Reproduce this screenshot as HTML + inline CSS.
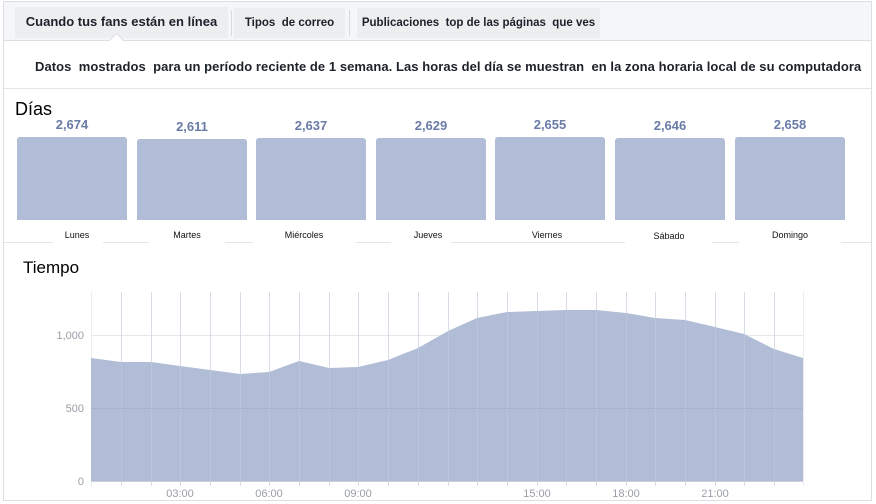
<!DOCTYPE html>
<html><head><meta charset="utf-8"><style>
body{margin:0;width:876px;height:504px;background:#fff;font-family:"Liberation Sans",Arial,sans-serif;position:relative;overflow:hidden}
.a{position:absolute}
.tab{position:absolute;top:8px;height:30px;background:#eceef0;font-size:11.5px;font-weight:bold;line-height:30px;color:#1d2129;white-space:nowrap;text-align:center}
.bar{position:absolute;top:137px;height:83px;width:110px;background:#b1bcd6;border-radius:3px 3px 0 0}
.num{position:absolute;width:110px;text-align:center;font-size:13px;font-weight:bold;color:#6a7ba6}
.lab{position:absolute;width:110px;text-align:center;font-size:9px;color:#111;top:230px}
</style></head><body>
<div class="a" style="left:3px;top:1px;width:869px;height:500px;border:1px solid #dcdee3;box-sizing:border-box"></div>
<div class="a" style="left:4px;top:2px;width:867px;height:38px;background:#f5f6f7;border-bottom:1px solid #dcdee3"></div>
<div class="tab" style="left:15px;width:213px;font-size:13px;top:7px;height:31px">Cuando tus fans están en línea</div>
<div class="a" style="left:231px;top:10px;width:1px;height:26px;background:#d8dade"></div>
<div class="tab" style="left:234px;width:111px">Tipos &nbsp;de correo</div>
<div class="a" style="left:349px;top:10px;width:1px;height:26px;background:#d8dade"></div>
<div class="tab" style="left:357px;width:243px">Publicaciones &nbsp;top de las páginas &nbsp;que ves</div>
<div class="a" style="left:111px;top:35px;width:10px;height:10px;background:#fff;border-left:1px solid #dcdee3;border-top:1px solid #dcdee3;transform:rotate(45deg)"></div>
<div class="a" style="left:35px;top:59px;font-size:13px;letter-spacing:.06px;font-weight:bold;color:#1d2129;white-space:nowrap">Datos &nbsp;mostrados &nbsp;para un período reciente de 1 semana. Las horas del día se muestran &nbsp;en la zona horaria local de su computadora</div>
<div class="a" style="left:4px;top:88px;width:867px;height:1px;background:#e3e5e8"></div>
<div class="a" style="left:15px;top:99px;font-size:18px;color:#000">Días</div>

<div class="num" style="left:17px;top:117px">2,674</div><div class="bar" style="left:17px;top:137px"></div><div class="lab" style="left:22px">Lunes</div>
<div class="num" style="left:137px;top:119px">2,611</div><div class="bar" style="left:137px;top:139px;height:81px"></div><div class="lab" style="left:132px">Martes</div>
<div class="num" style="left:256px;top:118px">2,637</div><div class="bar" style="left:256px;top:138px;height:82px"></div><div class="lab" style="left:249px">Miércoles</div>
<div class="num" style="left:376px;top:118px">2,629</div><div class="bar" style="left:376px;top:138px;height:82px"></div><div class="lab" style="left:373px">Jueves</div>
<div class="num" style="left:495px;top:117px">2,655</div><div class="bar" style="left:495px;top:137px"></div><div class="lab" style="left:492px">Viernes</div>
<div class="num" style="left:615px;top:118px">2,646</div><div class="bar" style="left:615px;top:138px;height:82px"></div><div class="lab" style="left:614px;top:231px">Sábado</div>
<div class="num" style="left:735px;top:117px">2,658</div><div class="bar" style="left:735px;top:137px"></div><div class="lab" style="left:735px">Domingo</div>

<svg class="a" style="left:0;top:0" width="876" height="504">
<g stroke="#e3e5e8" stroke-width="1">
<line x1="4" y1="242.5" x2="53" y2="242.5"/><line x1="103" y1="242.5" x2="149" y2="242.5"/><line x1="225" y1="242.5" x2="253" y2="242.5"/><line x1="356" y1="242.5" x2="391" y2="242.5"/><line x1="451" y1="242.5" x2="625" y2="242.5"/><line x1="712" y1="242.5" x2="739" y2="242.5"/><line x1="841" y1="242.5" x2="871" y2="242.5"/>
</g>
<g stroke="#ebedf0">
<path d="M91.5 292V486M121.5 292V486M151.5 292V486M180.5 292V486M210.5 292V486M240.5 292V486M269.5 292V486M299.5 292V486M329.5 292V486M358.5 292V486M388.5 292V486M418.5 292V486M448.5 292V486M477.5 292V486M507.5 292V486M537.5 292V486M566.5 292V486M596.5 292V486M626.5 292V486M655.5 292V486M685.5 292V486M715.5 292V486M744.5 292V486M774.5 292V486M803.5 292V486"/>
</g>
<line x1="91" y1="335.5" x2="803" y2="335.5" stroke="#e6e8ec"/>
<polygon fill="#b1bcd6" points="91,481 91,358 121,362 151,362 180,366 210,370 240,374 269,372 299,361 329,368 358,367 388,360 418,348 448,331 477,318 507,312 537,311 566,310 596,310 626,313 655,318 685,320 715,327 744,334 774,349 803,358 803,481"/>
<g stroke="#c4cbdd" stroke-opacity=".5">
<path d="M121.5 292V486M151.5 292V486M180.5 292V486M210.5 292V486M240.5 292V486M269.5 292V486M299.5 292V486M329.5 292V486M358.5 292V486M388.5 292V486M418.5 292V486M448.5 292V486M477.5 292V486M507.5 292V486M537.5 292V486M566.5 292V486M596.5 292V486M626.5 292V486M655.5 292V486M685.5 292V486M715.5 292V486M744.5 292V486M774.5 292V486"/>
</g>
<line x1="91" y1="408.5" x2="803" y2="408.5" stroke="#9ea9c6" stroke-opacity=".5"/>
<line x1="91" y1="481.5" x2="803" y2="481.5" stroke="#ccd0d8"/>
<g font-size="11" fill="#9a9ea6" font-family="Liberation Sans,Arial,sans-serif">
<text x="84" y="339" text-anchor="end">1,000</text>
<text x="84" y="412" text-anchor="end">500</text>
<text x="84" y="485" text-anchor="end">0</text>
<text x="180" y="497" text-anchor="middle">03:00</text>
<text x="269" y="497" text-anchor="middle">06:00</text>
<text x="358" y="497" text-anchor="middle">09:00</text>
<text x="537" y="497" text-anchor="middle">15:00</text>
<text x="626" y="497" text-anchor="middle">18:00</text>
<text x="715" y="497" text-anchor="middle">21:00</text>
</g>
</svg>
<div class="a" style="left:23px;top:258px;font-size:17px;color:#000">Tiempo</div>
</body></html>
